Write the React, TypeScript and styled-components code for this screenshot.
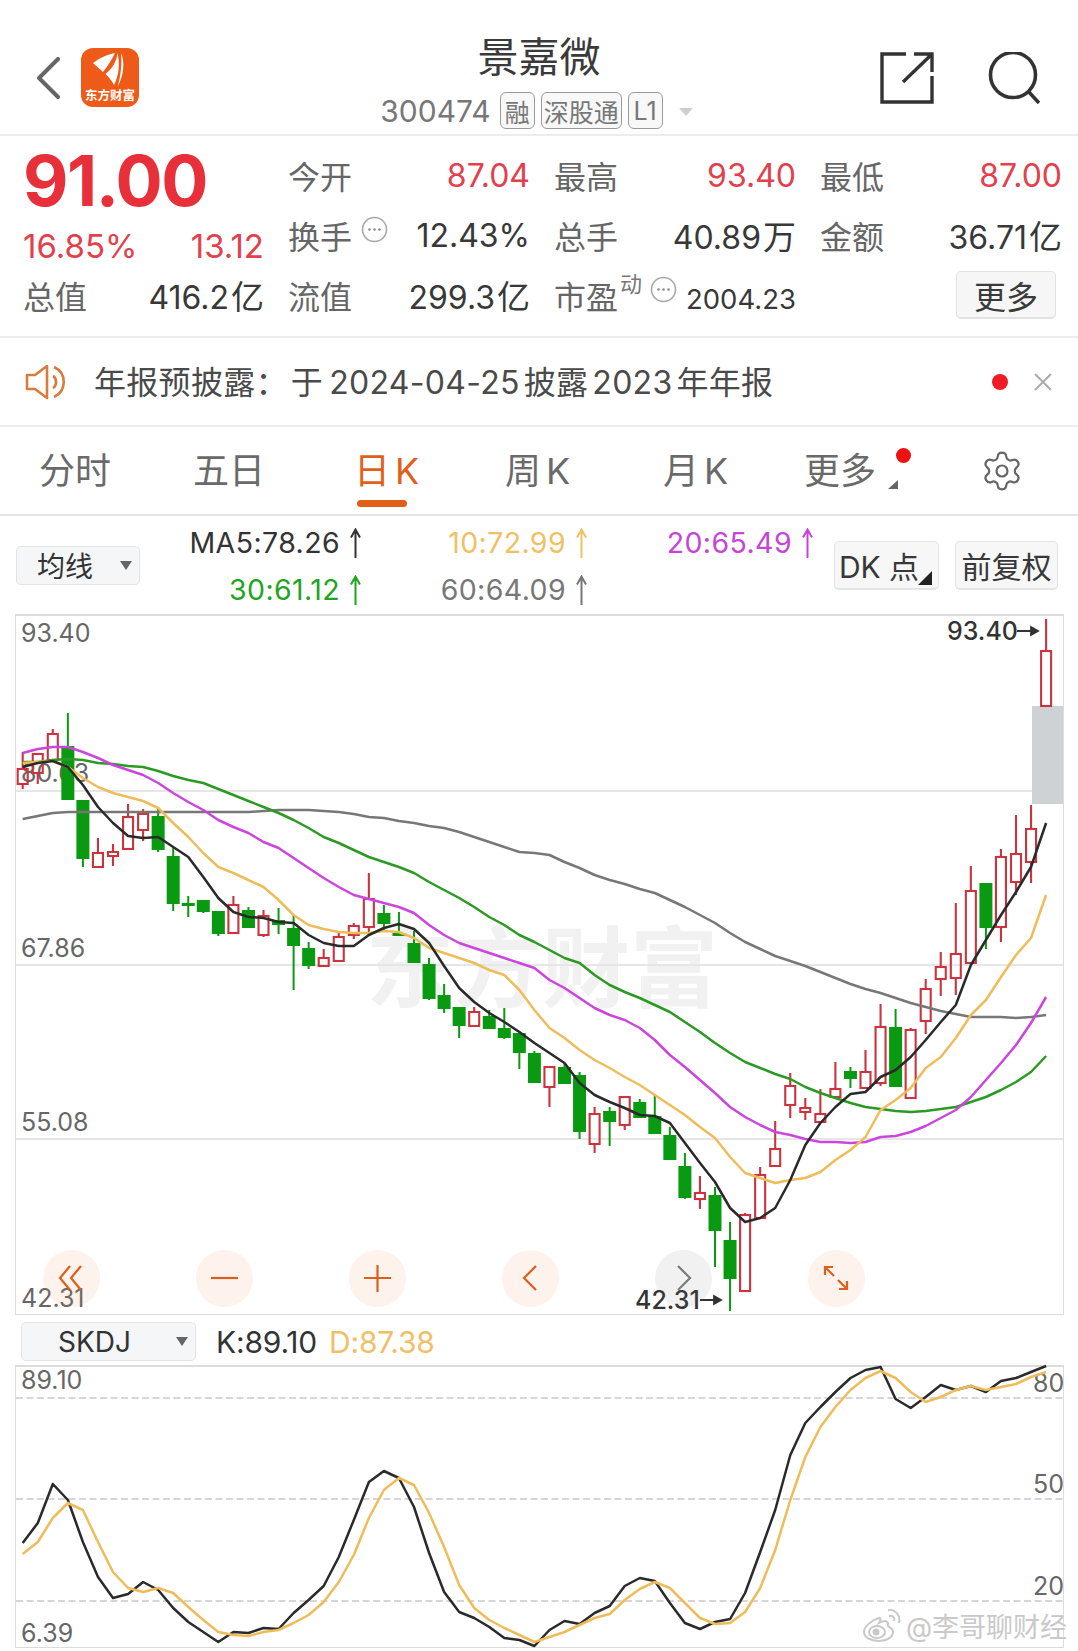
import React from "react";
import styled, { createGlobalStyle } from "styled-components";
import { Settings } from "lucide-react";

const GlobalStyle = createGlobalStyle`
  * { box-sizing: border-box; }
  html, body { margin: 0; padding: 0; background: #fff; }
  body { font-family: Inter, "Noto Sans CJK SC", sans-serif; color: #333; }
`;

const RED = "#e2404c";
const CANDLE_RED = "#c9343f";
const CANDLE_GREEN = "#0a9a12";
const ORANGE = "#e0601a";
const YELLOW = "#efbc5a";

const Page = styled.div`
  position: relative;
  width: 1078px;
  height: 1651px;
  overflow: hidden;
  background: #fff;
`;

/* ---------- header ---------- */
const Header = styled.header`
  display: grid;
  grid-template-columns: 1fr auto 1fr;
  height: 136px;
  border-bottom: 2px solid #ececec;
`;

const HeaderLeft = styled.div`
  display: flex;
  align-items: center;
  gap: 21px;
  height: 59px;
  margin-top: 48px;
  padding-left: 37px;
`;

const HeaderRight = styled.div`
  display: flex;
  justify-content: flex-end;
  align-items: flex-start;
  gap: 54px;
  margin-top: 52px;
  padding-right: 38px;
`;

const TitleBlock = styled.div`
  display: flex;
  flex-direction: column;
  align-items: center;
  padding-top: 35px;
`;

const Title = styled.div`
  font-size: 41px;
  line-height: 44px;
  color: #3a3a3a;
`;

const CodeRow = styled.div`
  display: flex;
  align-items: center;
  gap: 6px;
  margin: 13px 5px 0 0;
  height: 37px;
  color: #777;
`;

const Code = styled.span`
  font-size: 30px;
  margin-right: 3px;
`;

const Tag = styled.span`
  display: inline-flex;
  align-items: center;
  justify-content: center;
  min-width: 35px;
  height: 37px;
  padding: 0 2px;
  font-size: 25px;
  border: 1px solid #9a9a9a;
  border-radius: 6px;
  background: #f8f8f8;
  color: #777;
`;

const TagCaret = styled.span`
  width: 0;
  height: 0;
  margin-left: 10px;
  margin-top: 2px;
  border-left: 7px solid transparent;
  border-right: 7px solid transparent;
  border-top: 8px solid #cfcfcf;
`;

/* ---------- quote panel ---------- */
const Quote = styled.section`
  display: grid;
  grid-template-columns: 241px repeat(3, 242px);
  grid-template-rows: repeat(3, 60px);
  column-gap: 24px;
  height: 202px;
  padding: 9px 0 0 23px;
  border-bottom: 2px solid #ececec;
`;

const BigPrice = styled.div`
  font-size: 70px;
  font-weight: 700;
  line-height: 60px;
  padding-top: 6px;
  letter-spacing: -1.5px;
  color: #e8303a;
`;

const ChangeCell = styled.div`
  display: flex;
  justify-content: space-between;
  padding-top: 21px;
  font-size: 33px;
  color: ${RED};
`;

const Cell = styled.div`
  display: flex;
  align-items: center;
  justify-content: space-between;
`;

const LabelGroup = styled.div`
  display: flex;
  align-items: center;
  font-size: 32px;
  color: #666;
`;

const Value = styled.span<{ $red?: boolean; $small?: boolean }>`
  font-size: ${(p) => (p.$small ? "27.5px" : "32px")};
  padding-top: ${(p) => (p.$small ? "7px" : "0")};
  color: ${(p) => (p.$red ? RED : "#383838")};
`;

const Unit = styled.span`
  font-size: 33px;
  margin-left: 2px;
`;

const Sup = styled.sup`
  font-size: 22px;
  line-height: 1;
  color: #777;
  margin: -22px 0 0 2px;
`;

const InfoWrap = styled.span<{ $left: number }>`
  display: inline-flex;
  margin: -12px 0 0 ${(p) => p.$left}px;
`;

const MoreButton = styled.button`
  justify-self: end;
  align-self: center;
  width: 100px;
  height: 48px;
  margin: 0 6px 0 0;
  padding: 0;
  font: inherit;
  font-size: 32px;
  color: #3a3a3a;
  background: #f6f6f6;
  border: 1px solid #e2e2e2;
  border-bottom-width: 2px;
  border-radius: 5px;
`;

/* ---------- notice ---------- */
const Notice = styled.div`
  display: flex;
  align-items: center;
  height: 89px;
  padding: 0 26px 0 25px;
  border-bottom: 2px solid #ececec;
`;

const NoticeText = styled.span`
  flex: 1;
  margin-left: 27px;
  padding-bottom: 4px;
  font-size: 32px;
  letter-spacing: 0.3px;
  color: #4a4a4a;
  white-space: nowrap;
`;

const Thin = styled.span<{ $w: number }>`
  display: inline-block;
  width: ${(p) => p.$w}px;
`;

const RedDot = styled.span`
  width: 16px;
  height: 16px;
  border-radius: 50%;
  background: #ee1c25;
  margin-right: 26px;
`;

/* ---------- period tabs ---------- */
const Tabs = styled.nav`
  display: grid;
  grid-template-columns: 154px 161px 151px 158px 141px 176px auto;
  align-items: center;
  height: 89px;
  padding-left: 39px;
  border-bottom: 2px solid #e4e4e4;
`;

const Tab = styled.div<{ $active?: boolean }>`
  position: relative;
  font-size: 36px;
  line-height: 44px;
  color: ${(p) => (p.$active ? ORANGE : "#6a6a6a")};
`;

const TabBar = styled.span`
  position: absolute;
  left: 3px;
  top: 51px;
  width: 50px;
  height: 7px;
  border-radius: 4px;
  background: ${ORANGE};
`;

const TabDot = styled.span`
  position: absolute;
  left: 92px;
  top: -1px;
  width: 15px;
  height: 15px;
  border-radius: 50%;
  background: #ee1111;
`;

const TabCorner = styled.span`
  position: absolute;
  left: 84px;
  top: 31px;
  width: 0;
  height: 0;
  border-left: 10px solid transparent;
  border-bottom: 9px solid #666;
`;

/* ---------- moving averages row ---------- */
const MaRow = styled.div`
  display: flex;
  align-items: center;
  height: 98px;
  padding-left: 16px;
`;

const Select = styled.div<{ $width: number }>`
  position: relative;
  display: flex;
  align-items: center;
  width: ${(p) => p.$width}px;
  height: 39px;
  font-size: 28px;
  color: #333;
  background: #f5f6f7;
  border: 1px solid #e3e3e3;
  border-radius: 5px;
  &::after {
    content: "";
    position: absolute;
    right: 7px;
    top: 14px;
    border-left: 6px solid transparent;
    border-right: 6px solid transparent;
    border-top: 9px solid #666;
  }
`;

const SelectText = styled.span<{ $left: number }>`
  margin-left: ${(p) => p.$left}px;
`;

const MaGrid = styled.div`
  display: grid;
  grid-template-columns: 221px 226px 226px;
  grid-auto-rows: 47px;
  width: 674px;
  margin-right: 20px;
  padding-top: 2px;
`;

const MaItem = styled.div<{ $color: string; $col: number }>`
  grid-column: ${(p) => p.$col};
  display: flex;
  align-items: center;
  justify-content: flex-end;
  gap: 10px;
  font-size: 28.5px;
  letter-spacing: 0.4px;
  color: ${(p) => p.$color};
`;

const Square = styled.div`
  position: relative;
  display: flex;
  align-items: center;
  justify-content: center;
  height: 49px;
  font-size: 30px;
  color: #383838;
  background: #f7f7f7;
  border: 1px solid #e4e4e4;
  border-bottom-width: 2px;
  border-radius: 5px;
`;

const DkButton = styled(Square)`
  width: 105px;
  margin-right: 16px;
  padding-right: 15px;
  white-space: nowrap;
  &::after {
    content: "";
    position: absolute;
    right: 6px;
    bottom: 3px;
    border-left: 14px solid transparent;
    border-bottom: 14px solid #222;
  }
`;

const FqButton = styled(Square)`
  width: 103px;
`;

/* ---------- charts ---------- */
const ChartBox = styled.div<{ $height: number }>`
  position: relative;
  width: 1049px;
  height: ${(p) => p.$height}px;
  margin-left: 15px;
  border: 1px solid #dcdcdc;
  border-top-width: 2px;
`;

const ChartSvg = styled.svg`
  display: block;
  overflow: visible;
`;

const AxisLabel = styled.text`
  font-family: Inter, sans-serif;
  font-size: 25px;
  fill: #666;
`;

const MarkLabel = styled.text`
  font-family: Inter, sans-serif;
  font-size: 25px;
  font-weight: 500;
  fill: #333;
`;

const Watermark = styled.text`
  font-family: "Noto Sans CJK SC", sans-serif;
  font-size: 88px;
  font-weight: 700;
  fill: #f1f1f1;
`;

const ToolBar = styled.div`
  position: absolute;
  left: 27px;
  top: 634px;
  display: flex;
  gap: 96px;
`;

const ToolButton = styled.div<{ $muted?: boolean }>`
  display: flex;
  align-items: center;
  justify-content: center;
  width: 57px;
  height: 57px;
  border-radius: 50%;
  color: ${(p) => (p.$muted ? "#7b7b7b" : "#dd5f1c")};
  background: ${(p) => (p.$muted ? "rgba(120,120,120,0.1)" : "rgba(238,130,70,0.1)")};
`;

const KdjRow = styled.div`
  display: flex;
  align-items: center;
  gap: 20px;
  height: 50px;
  padding: 3px 0 0 21px;
`;

const KdjValue = styled.span<{ $color: string }>`
  font-size: 30px;
  letter-spacing: -0.2px;
  margin-right: -8px;
  color: ${(p) => p.$color};
`;

const WeiboMark = styled.div`
  position: absolute;
  right: -4px;
  bottom: 2px;
  display: flex;
  align-items: center;
  gap: 5px;
  font-size: 27px;
  color: #c9c9c9;
  text-shadow: 0 0 2px #fff;
`;

/* chart data, y in page pixels, one value per trading day */
const cx = (i: number) => 22.7 + 15.05 * i;

// [high, top, bottom, low, rising]
type Candle = [number, number, number, number, number];
const candles: Candle[] = [
  [752, 769, 784, 789, 1], [754, 754, 773, 784, 1], [729, 734, 760, 760, 1], [713, 747, 799, 800, 0],
  [801, 801, 858, 867, 0], [838, 853, 867, 867, 1], [844, 852, 856, 866, 1], [804, 817, 849, 849, 1],
  [809, 814, 830, 841, 1], [808, 817, 849, 852, 0], [848, 857, 903, 911, 0], [896, 904, 905, 917, 0],
  [900, 901, 911, 913, 0], [912, 912, 933, 936, 0], [896, 905, 933, 933, 1], [907, 911, 927, 928, 0],
  [910, 916, 935, 937, 1], [908, 921, 924, 934, 0], [915, 929, 945, 990, 0], [942, 949, 965, 969, 0],
  [949, 958, 966, 966, 1], [932, 937, 961, 961, 1], [923, 926, 935, 939, 1], [873, 899, 927, 935, 1],
  [905, 914, 923, 932, 0], [912, 934, 935, 936, 0], [931, 944, 962, 963, 0], [958, 965, 998, 1000, 0],
  [984, 996, 1008, 1013, 0], [1008, 1008, 1025, 1038, 0], [1007, 1012, 1026, 1026, 1], [1010, 1017, 1028, 1028, 0],
  [1008, 1029, 1037, 1039, 0], [1034, 1034, 1052, 1069, 0], [1051, 1054, 1082, 1083, 0], [1067, 1067, 1087, 1107, 1],
  [1063, 1068, 1083, 1083, 0], [1072, 1076, 1131, 1139, 0], [1107, 1114, 1144, 1153, 1], [1107, 1112, 1121, 1146, 0],
  [1097, 1097, 1125, 1130, 1], [1099, 1103, 1117, 1117, 0], [1094, 1117, 1133, 1133, 0], [1127, 1136, 1159, 1160, 0],
  [1153, 1167, 1197, 1199, 0], [1176, 1193, 1199, 1209, 1], [1187, 1196, 1230, 1267, 0], [1222, 1241, 1278, 1311, 0],
  [1213, 1215, 1291, 1291, 1], [1167, 1175, 1218, 1218, 1], [1121, 1149, 1166, 1166, 1], [1073, 1086, 1105, 1118, 1],
  [1098, 1108, 1112, 1120, 1], [1089, 1114, 1122, 1122, 1], [1062, 1089, 1097, 1097, 1], [1067, 1072, 1078, 1088, 0],
  [1050, 1072, 1088, 1088, 1], [1004, 1027, 1083, 1086, 1], [1009, 1028, 1086, 1086, 0], [1028, 1030, 1098, 1098, 1],
  [979, 989, 1021, 1034, 1], [952, 967, 979, 996, 1], [903, 954, 978, 995, 1], [866, 891, 963, 963, 1],
  [884, 884, 927, 949, 0], [849, 857, 927, 942, 1], [815, 854, 882, 895, 1], [805, 829, 862, 883, 1],
  [619, 651, 706, 706, 1],
];

const ma5 = [767, 763, 761, 767, 785, 807, 823, 836, 838, 837, 847, 857, 877, 898, 912, 917, 918, 922, 923, 935, 943, 946, 946, 935, 928, 924, 929, 943, 966, 988, 1002, 1013, 1022, 1032, 1043, 1053, 1063, 1083, 1095, 1102, 1108, 1115, 1116, 1123, 1143, 1163, 1182, 1208, 1222, 1218, 1208, 1180, 1145, 1123, 1107, 1094, 1092, 1077, 1070, 1057, 1040, 1022, 1005, 965, 940, 915, 892, 867, 823];
const ma10 = [763, 762, 761, 767, 778, 787, 793, 797, 801, 808, 823, 837, 853, 867, 873, 880, 887, 900, 915, 925, 929, 932, 933, 933, 931, 932, 938, 948, 953, 958, 963, 970, 975, 990, 1010, 1028, 1038, 1050, 1060, 1068, 1077, 1085, 1095, 1105, 1115, 1127, 1138, 1157, 1173, 1178, 1183, 1180, 1178, 1172, 1160, 1150, 1137, 1110, 1100, 1088, 1068, 1057, 1038, 1015, 1000, 977, 955, 938, 895];
const ma20 = [753, 749, 747, 747, 752, 758, 765, 770, 775, 783, 793, 802, 810, 820, 827, 833, 842, 848, 858, 868, 878, 887, 895, 899, 903, 907, 913, 925, 935, 943, 948, 953, 958, 963, 968, 980, 988, 998, 1008, 1015, 1020, 1028, 1040, 1055, 1067, 1080, 1093, 1107, 1117, 1125, 1132, 1135, 1139, 1142, 1142, 1143, 1142, 1137, 1136, 1132, 1126, 1118, 1110, 1097, 1080, 1063, 1045, 1023, 997];
const ma30 = [762, 762, 760, 759, 760, 763, 764, 766, 767, 771, 776, 780, 783, 789, 795, 801, 807, 813, 820, 828, 837, 843, 850, 857, 862, 867, 873, 882, 890, 898, 907, 917, 925, 935, 942, 950, 958, 963, 975, 985, 992, 998, 1005, 1012, 1022, 1032, 1043, 1053, 1062, 1068, 1074, 1079, 1087, 1093, 1098, 1103, 1107, 1109, 1111, 1112, 1111, 1109, 1107, 1102, 1097, 1090, 1082, 1072, 1056];
const ma60 = [819, 816, 813, 812, 812, 812, 812, 812, 812, 812, 812, 812, 812, 812, 812, 812, 811, 810, 810, 810, 811, 812, 814, 817, 818, 821, 823, 826, 828, 832, 837, 842, 847, 852, 853, 855, 862, 868, 875, 880, 884, 889, 893, 900, 907, 915, 923, 933, 942, 949, 956, 961, 966, 972, 978, 984, 989, 993, 998, 1003, 1007, 1011, 1014, 1017, 1017, 1017, 1018, 1017, 1015];

const kLine = [1543, 1523, 1484, 1500, 1542, 1577, 1598, 1594, 1582, 1590, 1608, 1622, 1632, 1642, 1632, 1633, 1628, 1629, 1613, 1600, 1586, 1557, 1520, 1482, 1471, 1478, 1507, 1553, 1592, 1612, 1618, 1627, 1638, 1640, 1646, 1630, 1621, 1624, 1613, 1606, 1586, 1578, 1581, 1603, 1623, 1629, 1622, 1619, 1593, 1552, 1510, 1455, 1423, 1407, 1392, 1378, 1370, 1367, 1399, 1408, 1397, 1385, 1390, 1386, 1392, 1381, 1378, 1372, 1366];
const dLine = [1554, 1542, 1518, 1503, 1510, 1542, 1572, 1588, 1592, 1588, 1593, 1607, 1620, 1632, 1635, 1636, 1632, 1630, 1623, 1615, 1602, 1582, 1555, 1518, 1490, 1478, 1485, 1513, 1547, 1585, 1608, 1620, 1628, 1635, 1642, 1637, 1632, 1625, 1618, 1614, 1600, 1589, 1582, 1588, 1603, 1618, 1624, 1623, 1612, 1588, 1550, 1500, 1457, 1427, 1407, 1390, 1378, 1371, 1378, 1392, 1402, 1397, 1390, 1386, 1390, 1387, 1384, 1377, 1372];

const points = (ys: number[]) => ys.map((y, i) => `${cx(i).toFixed(1)},${y}`).join(" ");

const maLines = [
  { ys: ma60, color: "#777777" },
  { ys: ma30, color: "#2a9a22" },
  { ys: ma20, color: "#cc45dc" },
  { ys: ma10, color: YELLOW },
  { ys: ma5, color: "#2a2a2a" },
];

const maValues = [
  { text: "MA5:78.26", color: "#333", col: 1 },
  { text: "10:72.99", color: "#efc065", col: 2 },
  { text: "20:65.49", color: "#c645d8", col: 3 },
  { text: "30:61.12", color: "#1fa51f", col: 1 },
  { text: "60:64.09", color: "#777", col: 2 },
];

const InfoDot = () => (
  <svg width="27" height="27" viewBox="0 0 27 27" fill="none">
    <circle cx="13.5" cy="13.5" r="12" stroke="#a8a8a8" strokeWidth="1.6" />
    <circle cx="8.5" cy="13.5" r="1.3" fill="#8a8a8a" />
    <circle cx="13.5" cy="13.5" r="1.3" fill="#8a8a8a" />
    <circle cx="18.5" cy="13.5" r="1.3" fill="#8a8a8a" />
  </svg>
);

const UpArrow = ({ color }: { color: string }) => (
  <svg width="11" height="30" viewBox="0 0 11 30" fill="none" stroke={color} strokeWidth="2">
    <path d="M5.5 30V2M1 9.5L5.5 1.5L10 9.5" />
  </svg>
);

const Logo = () => (
  <svg width="58" height="59" viewBox="0 0 58 59">
    <rect width="58" height="59" rx="12" fill="#ee5a17" />
    <path d="M12 15C20 9 28 6 34 5C31 11 27 18 22 24C19 21 15 18 12 15Z" fill="#fff" />
    <path d="M36.5 5C36 13 31 21 24.5 26C28 29 31 33 33 37C38 28 39 15 36.5 5Z" fill="#fff" />
    <path d="M40 5C44 14 43 28 36.5 38.5C40 28 41 15 40 5Z" fill="#fff" />
    <text x="29" y="52" textAnchor="middle" fontSize="12.5" fontWeight="700" fill="#fff" fontFamily="'Noto Sans CJK SC', sans-serif">
      东方财富
    </text>
  </svg>
);

const toolPaths: Record<string, string> = {
  first: "M13 2L3 14L13 26M24 2L14 14L24 26",
  minus: "M1 14H28",
  plus: "M1 14H28M14.5 1V28",
  prev: "M20 2L8 14L20 26",
  next: "M9 2L21 14L9 26",
  fit: "M3 11V3H11M3 3L12 12M25 17V25H17M25 25L16 16",
};

const ToolIcon = ({ name }: { name: string }) => (
  <svg width="29" height="29" viewBox="0 0 29 29" fill="none" stroke="currentColor" strokeWidth="2.2">
    <path d={toolPaths[name]} />
  </svg>
);

const MainChart = () => (
  <ChartSvg width="1047" height="698" viewBox="16 616 1047 698">
    <Watermark x="366" y="1000">东方财富</Watermark>
    {[791, 965, 1139].map((y) => (
      <line key={y} x1="16" x2="1063" y1={y} y2={y} stroke="#e6e6e6" strokeWidth="2" />
    ))}
    <AxisLabel x="21" y="642">93.40</AxisLabel>
    <AxisLabel x="21" y="782">80.63</AxisLabel>
    <AxisLabel x="21" y="957">67.86</AxisLabel>
    <AxisLabel x="21" y="1131">55.08</AxisLabel>
    <AxisLabel x="21" y="1307">42.31</AxisLabel>
    <rect x="1032" y="706" width="31" height="98" fill="#cfd2d5" />
    {candles.map(([hi, top, bottom, lo, up], i) => {
      const x = cx(i);
      const color = up ? CANDLE_RED : CANDLE_GREEN;
      return (
        <g key={i} stroke={color} strokeWidth={up ? 2.1 : 2}>
          <line x1={x} x2={x} y1={hi} y2={top} />
          <line x1={x} x2={x} y1={bottom} y2={lo} />
          {up ? (
            <rect x={x - 5} y={top} width={10} height={bottom - top} fill="none" />
          ) : (
            <rect x={x - 5.5} y={top} width={11} height={Math.max(bottom - top, 1)} fill={color} />
          )}
        </g>
      );
    })}
    {maLines.map((l) => (
      <polyline key={l.color} points={points(l.ys)} fill="none" stroke={l.color} strokeWidth="2.5" strokeLinejoin="round" />
    ))}
    <MarkLabel x="947" y="640">93.40</MarkLabel>
    <path d="M1017 631H1036M1031 627L1038 631L1031 635Z" stroke="#333" strokeWidth="1.8" fill="#333" />
    <MarkLabel x="635" y="1309">42.31</MarkLabel>
    <path d="M700 1300H719M714 1296L721 1300L714 1304Z" stroke="#333" strokeWidth="1.8" fill="#333" />
  </ChartSvg>
);

const KdjChart = () => (
  <ChartSvg width="1047" height="280" viewBox="16 1367 1047 280">
    {[1398, 1499, 1601].map((y) => (
      <line key={y} x1="16" x2="1063" y1={y} y2={y} stroke="#c9c9c9" strokeWidth="1.6" strokeDasharray="7 3.5" />
    ))}
    <AxisLabel x="21" y="1389">89.10</AxisLabel>
    <AxisLabel x="21" y="1642">6.39</AxisLabel>
    <AxisLabel x="1033" y="1392">80</AxisLabel>
    <AxisLabel x="1033" y="1493">50</AxisLabel>
    <AxisLabel x="1033" y="1595">20</AxisLabel>
    <polyline points={points(kLine)} fill="none" stroke="#2a2a2a" strokeWidth="2.5" strokeLinejoin="round" />
    <polyline points={points(dLine)} fill="none" stroke={YELLOW} strokeWidth="2.5" strokeLinejoin="round" />
  </ChartSvg>
);

const WeiboLogo = () => (
  <svg width="38" height="33" viewBox="0 0 38 33" fill="none" stroke="#c9c9c9" strokeWidth="2">
    <path d="M16 9C8 11 1 18 1 23C1 29 9 32 16 32C24 32 30 28 30 23C30 19 26 18 25 17C26 13 23 10 16 14C18 10 18 8 16 9Z" />
    <ellipse cx="14" cy="23" rx="8" ry="6" />
    <circle cx="13" cy="23" r="2.5" fill="#c9c9c9" />
    <path d="M25 1C32 0 38 6 36 14M26 7C30 6 32 9 31 12" />
  </svg>
);

export default function App() {
  return (
    <Page>
      <GlobalStyle />
      <Header>
        <HeaderLeft>
          <svg width="23" height="42" viewBox="0 0 23 42" fill="none" stroke="#666" strokeWidth="4" strokeLinecap="round" strokeLinejoin="round">
            <path d="M21 2L2 21L21 40" />
          </svg>
          <Logo />
        </HeaderLeft>
        <TitleBlock>
          <Title>景嘉微</Title>
          <CodeRow>
            <Code>300474</Code>
            <Tag>融</Tag>
            <Tag>深股通</Tag>
            <Tag>L1</Tag>
            <TagCaret />
          </CodeRow>
        </TitleBlock>
        <HeaderRight>
          <svg width="54" height="52" viewBox="0 0 54 52" fill="none" stroke="#333" strokeWidth="3.4">
            <path d="M26 2H2V50H52V24M23 30L51 3M34 2H52V20" />
          </svg>
          <svg width="52" height="52" viewBox="0 0 52 52" fill="none" stroke="#333" strokeWidth="3.6">
            <circle cx="25" cy="23" r="22.5" />
            <path d="M40 39L51 51" />
          </svg>
        </HeaderRight>
      </Header>

      <Quote>
        <BigPrice>91.00</BigPrice>
        <Cell>
          <LabelGroup>今开</LabelGroup>
          <Value $red>87.04</Value>
        </Cell>
        <Cell>
          <LabelGroup>最高</LabelGroup>
          <Value $red>93.40</Value>
        </Cell>
        <Cell>
          <LabelGroup>最低</LabelGroup>
          <Value $red>87.00</Value>
        </Cell>

        <ChangeCell>
          <span>16.85%</span>
          <span>13.12</span>
        </ChangeCell>
        <Cell>
          <LabelGroup>
            换手
            <InfoWrap $left={9}><InfoDot /></InfoWrap>
          </LabelGroup>
          <Value>12.43%</Value>
        </Cell>
        <Cell>
          <LabelGroup>总手</LabelGroup>
          <Value>40.89<Unit>万</Unit></Value>
        </Cell>
        <Cell>
          <LabelGroup>金额</LabelGroup>
          <Value>36.71<Unit>亿</Unit></Value>
        </Cell>

        <Cell>
          <LabelGroup>总值</LabelGroup>
          <Value>416.2<Unit>亿</Unit></Value>
        </Cell>
        <Cell>
          <LabelGroup>流值</LabelGroup>
          <Value>299.3<Unit>亿</Unit></Value>
        </Cell>
        <Cell>
          <LabelGroup>
            市盈
            <Sup>动</Sup>
            <InfoWrap $left={8}><InfoDot /></InfoWrap>
          </LabelGroup>
          <Value $small>2004.23</Value>
        </Cell>
        <MoreButton>更多</MoreButton>
      </Quote>

      <Notice>
        <svg width="42" height="36" viewBox="0 0 42 36" fill="none" stroke="#d97b3c" strokeWidth="2.6" strokeLinejoin="round">
          <path d="M2 11H10L22 2V34L10 25H2Z" />
          <path d="M29 3C42 9 42 27 29 33M28 12C32 14 32 22 28 24" />
        </svg>
        <NoticeText>
          年报预披露：<Thin $w={3} />于<Thin $w={6} />2024-04-25<Thin $w={4} />披露<Thin $w={4} />2023<Thin $w={4} />年年报
        </NoticeText>
        <RedDot />
        <svg width="18" height="18" viewBox="0 0 18 18" stroke="#ababab" strokeWidth="2">
          <path d="M1 1L17 17M17 1L1 17" />
        </svg>
      </Notice>

      <Tabs>
        <Tab>分时</Tab>
        <Tab>五日</Tab>
        <Tab $active>
          日<Thin $w={5} />K
          <TabBar />
        </Tab>
        <Tab>周<Thin $w={5} />K</Tab>
        <Tab>月<Thin $w={5} />K</Tab>
        <Tab>
          更多
          <TabDot />
          <TabCorner />
        </Tab>
        <Settings size={44} color="#666" strokeWidth={1.2} />
      </Tabs>

      <MaRow>
        <Select $width={124}>
          <SelectText $left={20}>均线</SelectText>
        </Select>
        <MaGrid>
          {maValues.map((m) => (
            <MaItem key={m.text} $color={m.color} $col={m.col}>
              {m.text}
              <UpArrow color={m.color} />
            </MaItem>
          ))}
        </MaGrid>
        <DkButton>DK 点</DkButton>
        <FqButton>前复权</FqButton>
      </MaRow>

      <ChartBox $height={701}>
        <MainChart />
        <ToolBar>
          <ToolButton><ToolIcon name="first" /></ToolButton>
          <ToolButton><ToolIcon name="minus" /></ToolButton>
          <ToolButton><ToolIcon name="plus" /></ToolButton>
          <ToolButton><ToolIcon name="prev" /></ToolButton>
          <ToolButton $muted><ToolIcon name="next" /></ToolButton>
          <ToolButton><ToolIcon name="fit" /></ToolButton>
        </ToolBar>
      </ChartBox>

      <KdjRow>
        <Select $width={175}>
          <SelectText $left={36}>SKDJ</SelectText>
        </Select>
        <KdjValue $color="#333">K:89.10</KdjValue>
        <KdjValue $color="#efc065">D:87.38</KdjValue>
      </KdjRow>

      <ChartBox $height={283}>
        <KdjChart />
        <WeiboMark>
          <WeiboLogo />
          @李哥聊财经
        </WeiboMark>
      </ChartBox>
    </Page>
  );
}
